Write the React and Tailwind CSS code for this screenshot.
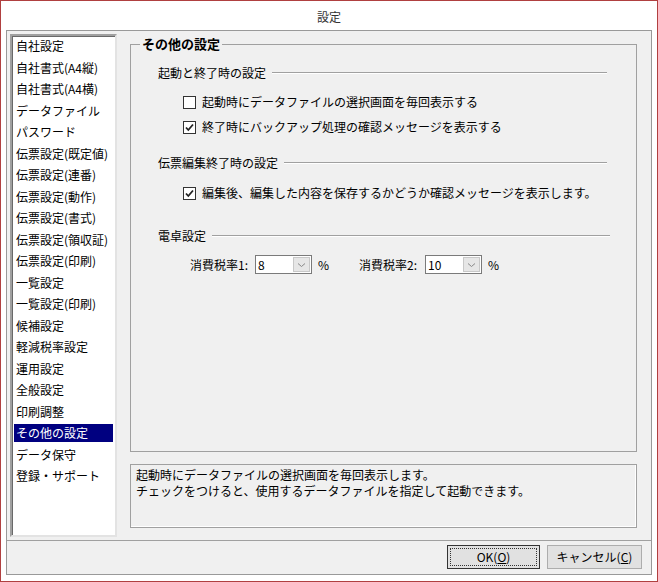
import React from 'react';

const items = ['自社設定','自社書式(A4縦)','自社書式(A4横)','データファイル','パスワード','伝票設定(既定値)','伝票設定(連番)','伝票設定(動作)','伝票設定(書式)','伝票設定(領収証)','伝票設定(印刷)','一覧設定','一覧設定(印刷)','候補設定','軽減税率設定','運用設定','全般設定','印刷調整','その他の設定','データ保守','登録・サポート'];

function Checkbox({ checked, label }) {
  return (
    <div className="flex items-center h-[18px] ml-[52px]">
      <div className="w-[13px] h-[13px] border border-[#333] bg-white flex items-center justify-center">
        {checked && (
          <svg width="11" height="11" viewBox="0 0 11 11">
            <path d="M2 5.5 L4.3 8 L9 2.5" stroke="#222" strokeWidth="1.8" fill="none" />
          </svg>
        )}
      </div>
      <span className="ml-[6px] leading-[18px]">{label}</span>
    </div>
  );
}

function SectionHeader({ label, pr, mt }) {
  return (
    <div className={`flex items-center h-[18px] pl-[27px] ${pr} ${mt}`}>
      <span className="leading-[18px]">{label}</span>
      <div className="flex-1 ml-[6px] h-[2px] border-t border-t-[#a0a0a0] border-b border-b-white" />
    </div>
  );
}

function Combo({ value, width }) {
  return (
    <div className={`flex h-[19px] ${width} border border-[#7a7a7a] bg-white`}>
      <div className="flex-1 pl-[2px] leading-[17px]">{value}</div>
      <div className="w-[17px] m-[1px] bg-[#e6e6e6] border border-[#c8c8c8] flex items-center justify-center">
        <svg width="9" height="6" viewBox="0 0 9 6">
          <path d="M1 1.5 L4.5 4.5 L8 1.5" stroke="#888" strokeWidth="1" fill="none" />
        </svg>
      </div>
    </div>
  );
}

export default function App() {
  return (
    <div
      className="w-[658px] h-[582px] border border-[#b04040] bg-white flex flex-col text-[12px] text-black"
      style={{ fontFamily: '"Noto Sans CJK JP", "Noto Sans", sans-serif' }}
    >
      <div className="h-[29px] flex items-center justify-center text-[12px] text-[#333] pt-[2px]">設定</div>
      <div className="ml-[5px] w-[646px] h-[545px] border border-[#999] bg-[#f0f0f0] flex flex-col">
        <div className="flex pt-[3px] pl-[3px]">
          <div className="w-[107px] h-[503px] bg-white border-2 border-t-[#a0a0a0] border-l-[#a0a0a0] border-r-[#e3e3e3] border-b-[#e3e3e3] shadow-[inset_1px_1px_0_#696969]">
            <div className="flex flex-col gap-[3.5px] px-[2px] pt-[1px]">
              {items.map((it) => (
                <div
                  key={it}
                  className={`h-[18px] leading-[18px] pl-[2px] whitespace-nowrap ${it === 'その他の設定' ? 'bg-[#000080] text-white' : ''}`}
                >
                  {it}
                </div>
              ))}
            </div>
          </div>
          <div className="ml-[13px] mt-[10px] flex flex-col">
            <div className="w-[507px] h-[408px] border border-[#a0a0a0]">
              <div className="-mt-[10px] ml-[9px] w-fit px-[2px] bg-[#f0f0f0] font-bold text-[13px] leading-[18px]">その他の設定</div>
              <SectionHeader label="起動と終了時の設定" pr="pr-[29px]" mt="mt-[11px]" />
              <div className="mt-[11px]">
                <Checkbox checked={false} label="起動時にデータファイルの選択画面を毎回表示する" />
              </div>
              <div className="mt-[7px]">
                <Checkbox checked={true} label="終了時にバックアップ処理の確認メッセージを表示する" />
              </div>
              <SectionHeader label="伝票編集終了時の設定" pr="pr-[29px]" mt="mt-[18px]" />
              <div className="mt-[12px]">
                <Checkbox checked={true} label="編集後、編集した内容を保存するかどうか確認メッセージを表示します。" />
              </div>
              <SectionHeader label="電卓設定" pr="pr-[26px]" mt="mt-[25px]" />
              <div className="mt-[10px] flex items-center h-[19px] pl-[59px]">
                <span className="w-[65px]">消費税率1:</span>
                <Combo value="8" width="w-[57px]" />
                <span className="ml-[6px] w-[41px]">%</span>
                <span className="w-[66px]">消費税率2:</span>
                <Combo value="10" width="w-[57px]" />
                <span className="ml-[6px]">%</span>
              </div>
            </div>
            <div className="mt-[12px] w-[507px] h-[64px] border border-[#a0a0a0] shadow-[inset_-1px_-1px_0_#ffffff] pl-[5px] pt-[2px] leading-[16px]">
              <div>起動時にデータファイルの選択画面を毎回表示します。</div>
              <div>チェックをつけると、使用するデータファイルを指定して起動できます。</div>
            </div>
          </div>
        </div>
        <div className="mt-[3px] flex-1 border-t border-[#a0a0a0] flex justify-end items-start pt-[4px] pr-[9px] gap-[7px]">
          <button className="w-[93px] h-[24px] bg-[#e1e1e1] border border-[#333] flex items-center justify-center p-[2px]">
            <span className="w-full h-full border border-dotted border-[#333] flex items-center justify-center leading-none">
              OK(<span className="underline">O</span>)
            </span>
          </button>
          <button className="w-[95px] h-[24px] bg-[#e1e1e1] border border-[#adadad] flex items-center justify-center leading-none">
            キャンセル(<span className="underline">C</span>)
          </button>
        </div>
      </div>
    </div>
  );
}
